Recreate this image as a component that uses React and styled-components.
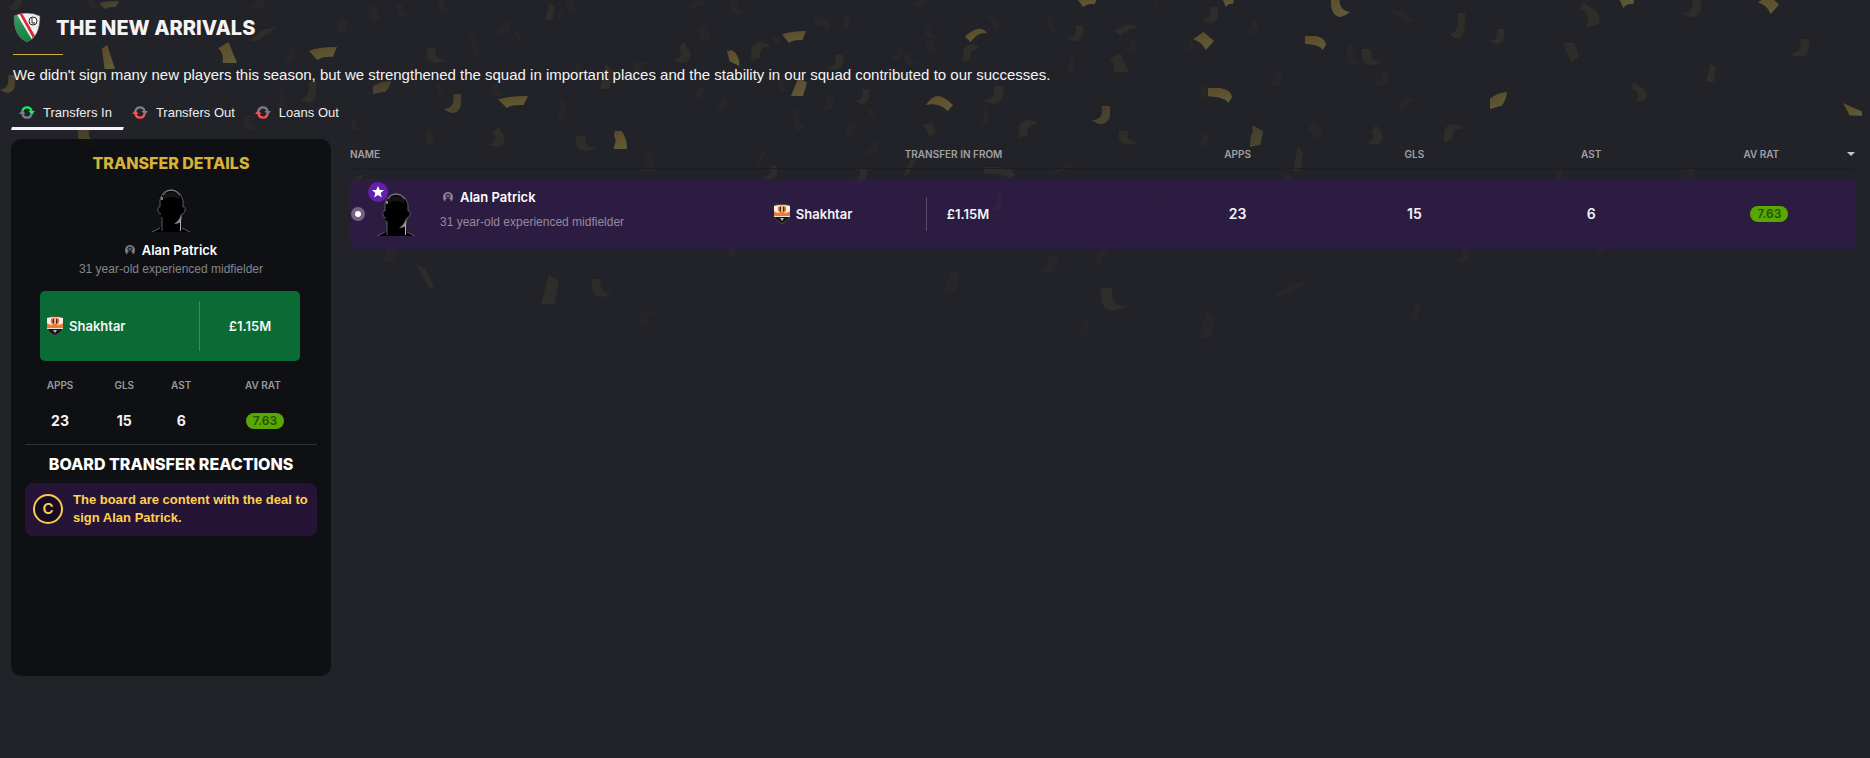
import React from "react";
import styled, { createGlobalStyle, css } from "styled-components";

const GlobalStyle = createGlobalStyle`
  *, *::before, *::after { box-sizing: border-box; }
  html, body { margin: 0; min-height: 100%; background: #222328; }
  body {
    color: #f4f4f5;
    font-family: "Inter", "Liberation Sans", sans-serif;
    font-size: 13px;
    line-height: 18px;
  }
  h1, h2, p { margin: 0; }
  table { border-collapse: collapse; border-spacing: 0; }
  th, td { padding: 0; }
`;

/* ---------- confetti backdrop ---------- */

const SHAPES = {
  j: "M11 0H20V9C20 16 15 20 10 20Q4 19 0 16Q10 15 11 8Z",
  l: "M9 0H0V9C0 16 5 20 10 20Q16 19 20 16Q10 15 9 8Z",
  r: "M0 20V11C0 4 5 0 11 0Q16 1 20 5Q10 4 9 12V17Z",
  q: "M20 20V11C20 4 15 0 9 0Q4 1 0 5Q10 4 11 12V17Z",
  c: "M12 0L19 9Q22 17 12 20L0 18Q11 14 9 9L6 6Z",
  d: "M3 0L16 7Q22 13 18 18L5 20Q14 11 0 6Z",
  t: "M9 0L20 5L15 20H0Z",
  b: "M0 0H14L20 15L10 20Z",
  k: "M0 6L11 0L20 20H5Q6 9 0 6Z",
  a: "M0 6Q6 0 20 0L17 15Q9 14 6 20Z",
  n: "M0 12Q8 0 14 1Q18 2 20 8Q13 4 5 20Z",
  h: "M0 12Q4 0 9 0Q14 1 20 12L16 20Q10 8 0 12Z",
  m: "M0 0H10Q19 2 20 12L17 20Q14 12 0 11Z",
  s: "M0 20L9 4L20 0L5 20Z",
  v: "M0 0L11 4L20 18L15 20Z",
  w: "M0 0L20 13V20L7 19Z",
  o: "M0 2L7 0Q20 6 19 20L4 14Z",
  p: "M0 20V8Q8 1 20 0Q19 9 14 16Z",
  x: "M0 8L10 0L20 10L12 20Q9 11 0 8Z",
  z: "M4 0L20 6L16 18L0 20Q0 9 4 7Z",
  e: "M3 0Q0 5 4 10L1 20H20Q20 7 12 0Z",
  f: "M0 3L8 0L20 20H4Z",
};

/* shape, x, y, width, height, strength 0-4 */
const CONFETTI = [
  ["j", 7, -8, 15, 18, 2], ["l", 88, -6, 15, 16, 1], ["a", 99, 1, 20, 8, 3], ["t", 152, 12, 9, 16, 0],
  ["j", 247, -6, 17, 16, 1], ["s", 250, 27, 27, 14, 2], ["k", 366, 5, 16, 15, 1], ["l", 397, 4, 12, 13, 1],
  ["l", 438, 0, 13, 12, 1], ["t", 336, 17, 13, 15, 1], ["v", 467, 30, 12, 26, 1], ["f", 102, 45, 13, 24, 4],
  ["k", 218, 42, 19, 21, 4], ["a", 309, 47, 28, 13, 4], ["j", 282, 48, 13, 16, 1], ["l", 427, 48, 19, 15, 2],
  ["j", 0, 75, 15, 18, 3], ["p", 373, 81, 18, 13, 3], ["j", 300, 82, 16, 21, 2], ["l", 437, 84, 9, 11, 1],
  ["j", 444, 94, 17, 19, 3], ["l", 244, 116, 14, 15, 1], ["l", 351, 119, 11, 12, 1], ["j", 276, 90, 8, 21, 1],
  ["l", 78, 127, 24, 20, 3], ["k", 424, 130, 10, 14, 1], ["t", 216, 55, 25, 11, 0],
  ["t", 545, 3, 10, 17, 2], ["s", 556, 8, 10, 12, 1], ["l", 567, 1, 15, 13, 1], ["n", 689, 0, 18, 10, 1],
  ["l", 730, -5, 17, 20, 1], ["j", 910, -6, 15, 13, 1], ["j", 494, 21, 16, 13, 1], ["v", 511, 28, 10, 12, 1],
  ["k", 696, 25, 16, 15, 1], ["m", 815, 17, 15, 15, 1], ["t", 842, 12, 8, 16, 1], ["c", 673, 42, 18, 21, 2],
  ["a", 782, 31, 24, 12, 4], ["o", 727, 50, 13, 16, 4], ["r", 751, 42, 20, 19, 2], ["x", 770, 35, 11, 10, 1],
  ["l", 925, 26, 14, 13, 1], ["l", 926, 41, 16, 12, 1], ["n", 965, 28, 22, 14, 4], ["r", 963, 44, 17, 18, 2],
  ["j", 890, 47, 13, 13, 1], ["l", 904, 53, 14, 12, 1], ["j", 827, 55, 16, 15, 2], ["r", 633, 61, 17, 12, 1],
  ["t", 600, 64, 13, 25, 2], ["t", 791, 78, 16, 18, 4], ["k", 573, 62, 11, 13, 1], ["l", 492, 83, 12, 14, 1],
  ["a", 498, 96, 30, 12, 4], ["t", 557, 98, 9, 21, 1], ["j", 690, 87, 14, 11, 1], ["j", 714, 98, 13, 13, 1],
  ["l", 793, 110, 13, 21, 1], ["j", 819, 97, 14, 14, 1], ["j", 855, 89, 14, 15, 2], ["v", 865, 106, 12, 16, 1],
  ["l", 779, 80, 8, 12, 1], ["h", 926, 96, 27, 15, 4], ["b", 923, 124, 13, 12, 2], ["r", 846, 124, 14, 13, 1],
  ["c", 488, 127, 17, 20, 2], ["l", 576, 136, 21, 15, 2], ["e", 613, 131, 14, 18, 4], ["c", 642, 149, 12, 23, 1],
  ["j", 864, 141, 14, 14, 1], ["s", 755, 150, 12, 17, 1], ["j", 763, 166, 14, 14, 2], ["s", 904, 157, 14, 18, 2],
  ["j", 851, 169, 16, 15, 2], ["c", 422, 130, 13, 15, 1],
  ["a", 1077, -5, 21, 12, 4], ["s", 1151, 0, 9, 11, 1], ["a", 1222, -6, 13, 13, 4], ["l", 1331, -8, 19, 25, 4],
  ["j", 1202, 7, 16, 16, 2], ["v", 1386, 9, 29, 13, 1], ["q", 985, 16, 14, 15, 1], ["l", 1048, 17, 11, 16, 1],
  ["j", 1067, 25, 16, 16, 2], ["n", 1115, 24, 23, 12, 2], ["j", 1243, 21, 15, 13, 1], ["c", 1125, 38, 12, 14, 1],
  ["x", 1193, 32, 21, 18, 4], ["c", 1186, 37, 8, 14, 1], ["m", 1305, 36, 21, 14, 4], ["k", 1109, 53, 20, 19, 2],
  ["t", 1067, 53, 8, 20, 1], ["l", 1347, 45, 13, 20, 1], ["l", 1362, 49, 20, 16, 2], ["j", 983, 86, 20, 18, 2],
  ["c", 980, 104, 9, 22, 1], ["j", 1269, 73, 12, 13, 1], ["j", 1373, 71, 15, 15, 1], ["c", 1196, 84, 12, 15, 1],
  ["m", 1208, 88, 24, 15, 4], ["j", 1092, 106, 18, 18, 3], ["r", 1400, 97, 16, 15, 1], ["r", 1019, 120, 19, 18, 2],
  ["l", 1119, 131, 19, 14, 2], ["z", 1250, 125, 13, 22, 3], ["j", 1195, 134, 13, 12, 1], ["x", 1307, 121, 16, 20, 1],
  ["c", 1366, 125, 17, 20, 2], ["t", 1293, 146, 10, 25, 2], ["s", 1051, 162, 29, 12, 1], ["m", 984, 167, 31, 12, 2],
  ["t", 1281, 172, 12, 20, 1], ["s", 1151, 185, 14, 18, 2], ["j", 992, 193, 10, 18, 3], ["c", 1180, 209, 16, 20, 1],
  ["t", 1342, 217, 11, 17, 1], ["q", 1076, 230, 13, 12, 1], ["j", 1038, 256, 19, 17, 1], ["r", 1096, 250, 14, 14, 1],
  ["l", 1101, 288, 25, 23, 2], ["s", 1274, 281, 38, 15, 1], ["t", 1199, 311, 16, 27, 1], ["t", 1411, 301, 9, 18, 1],
  ["t", 1080, 317, 9, 18, 0],
  ["d", 1580, 2, 20, 25, 2], ["a", 1618, -8, 18, 16, 4], ["j", 1682, 0, 19, 17, 2], ["x", 1758, -5, 21, 19, 4],
  ["j", 1449, 13, 16, 26, 2], ["j", 1489, 29, 15, 15, 2], ["b", 1563, 43, 16, 19, 2], ["j", 1790, 39, 19, 18, 2],
  ["t", 1706, 63, 10, 19, 2], ["d", 1631, 82, 16, 20, 2], ["p", 1490, 92, 17, 17, 4], ["w", 1843, 103, 19, 13, 4],
  ["r", 1444, 124, 19, 18, 2], ["j", 1547, 171, 15, 15, 1], ["j", 1677, 168, 18, 17, 1], ["r", 1711, 202, 20, 18, 1],
  ["s", 1596, 236, 16, 20, 1], ["j", 1455, 248, 14, 15, 1],
  ["s", 348, 174, 17, 16, 2], ["t", 384, 238, 14, 24, 1],
  ["j", 478, 186, 9, 18, 2], ["v", 416, 264, 18, 25, 2], ["t", 541, 274, 18, 30, 2], ["l", 592, 279, 19, 18, 2],
  ["c", 544, 230, 15, 14, 1], ["t", 728, 238, 10, 18, 1], ["t", 893, 191, 11, 20, 1], ["t", 944, 268, 16, 24, 1],
  ["r", 640, 310, 17, 17, 0], ["l", 754, 187, 14, 14, 1], ["k", 185, 178, 19, 17, 2], ["x", 309, 168, 15, 17, 1],
  ["q", 217, 144, 14, 16, 1], ["l", 425, 180, 14, 12, 0],
];

const CONFETTI_FILL = [
  { fill: "#7a6a30", opacity: 0.04 },
  { fill: "#7a6a30", opacity: 0.06 },
  { fill: "#7a6a30", opacity: 0.14 },
  { fill: "url(#gold)", opacity: 0.5 },
  { fill: "url(#gold)", opacity: 0.78 },
];

const Backdrop = styled.svg`
  position: absolute;
  top: 0;
  left: 0;
  width: 100%;
  height: 360px;
  z-index: -1;
  pointer-events: none;
`;

const Confetti = () => (
  <Backdrop viewBox="0 0 1870 360" preserveAspectRatio="xMinYMin slice" aria-hidden="true">
    <defs>
      <linearGradient id="gold" x1="0" y1="0" x2="0.4" y2="1">
        <stop offset="0" stopColor="#6e5328" />
        <stop offset="1" stopColor="#6e6a3a" />
      </linearGradient>
    </defs>
    {CONFETTI.map(([shape, x, y, w, h, strength], i) => (
      <path
        key={i}
        d={SHAPES[shape]}
        transform={`translate(${x} ${y}) scale(${w / 20} ${h / 20})`}
        {...CONFETTI_FILL[strength]}
      />
    ))}
  </Backdrop>
);

/* ---------- drawings ---------- */

const LegiaCrest = () => (
  <svg width="28" height="30" viewBox="0 0 28 30" aria-hidden="true">
    <defs>
      <clipPath id="legia-shield">
        <path d="M1 3Q7 0 14 0T27 3C27 16 24 24 14 29C4 24 1 16 1 3Z" />
      </clipPath>
      <linearGradient id="legia-green" x1="0" y1="0" x2="0" y2="1">
        <stop offset="0" stopColor="#3f9c63" />
        <stop offset="1" stopColor="#0d8040" />
      </linearGradient>
    </defs>
    <g clipPath="url(#legia-shield)">
      <path d="M0 0H28V30H0Z" fill="#ececec" />
      <path d="M0 0H4L23 30H0Z" fill="url(#legia-green)" />
      <path d="M3 0H12L28 26V30H21Z" fill="#f4f4f4" />
      <path d="M6 0H9L25 28L22 29Z" fill="#dc2a36" />
    </g>
    <path d="M1 3Q7 0 14 0T27 3C27 16 24 24 14 29C4 24 1 16 1 3Z" fill="none" stroke="#555" strokeOpacity=".6" />
    <circle cx="20" cy="8" r="4" fill="#fff" stroke="#222" />
    <path d="M19 5V10H22" fill="none" stroke="#222" />
  </svg>
);

const ShakhtarCrest = () => (
  <svg width="18" height="20" viewBox="0 0 18 20" aria-hidden="true">
    <path d="M1 1Q9 -1 17 1V11Q16 17 9 20Q2 17 1 11Z" fill="#55504c" />
    <path d="M1 2Q9 0 17 2V8Q17 11 14 11H4Q1 11 1 8Z" fill="#f6efe8" />
    <path d="M1 7Q3 9 9 9T17 7V12H1Z" fill="#ef7a2c" />
    <path d="M5 3Q4 9 9 9T13 3Q9 0 5 3Z" fill="#e8722a" />
    <path d="M8.500 2H9.500V8H8.500Z" fill="#f6efe8" />
    <path d="M7 3H8V8Q6 7 7 3ZM10 3H11Q12 7 10 8Z" fill="#3a2820" />
    <path d="M2 13H16Q14 17 9 19Q4 17 2 13Z" fill="#17171a" />
    <path d="M1 12H17V13H1Z" fill="#e6e1da" />
    <path d="M7 14H11L9 17Z" fill="#b9b9b9" />
  </svg>
);

const Silhouette = () => (
  <svg width="40" height="44" viewBox="0 0 40 44" aria-hidden="true">
    <path
      d="M1 44Q5 41 11 39V30Q8 25 7 23Q6 18 9 19V12Q11 2 20 2T32 12V19Q35 18 34 23Q33 26 31 26L30 32V39Q36 41 39 44Z"
      fill="#000"
    />
    <path d="M12 9Q20 4 29 9" fill="none" stroke="#141414" strokeWidth="5" />
    <path
      d="M9 19V12Q11 2 20 2T32 12V19Q35 18 34 23Q33 26 31 26L30 32"
      fill="none"
      stroke="#5c5c5c"
    />
    <path d="M12 7Q15 2 20 2T29 7" fill="none" stroke="#8a8a8a" />
    <path d="M9 19Q6 18 7 23Q8 26 10 26M11 29V43" fill="none" stroke="#5a5a5a" />
    <path d="M11 9V12" stroke="#f5f5f5" />
    <path d="M30 26Q29 32 23 36Q27 36 30 34Z" fill="#8a8a8a" />
    <path d="M29.500 32V43" stroke="#b4b4b4" />
    <path d="M1 44L9 40M39 44L31 40" stroke="#606060" />
  </svg>
);

const PersonIcon = () => (
  <svg width="10" height="10" viewBox="0 0 10 10" aria-hidden="true">
    <path
      fillRule="evenodd"
      d="M5 0A5 5 0 0 1 10 5Q10 8 8 9.500Q8 7 6 6.500Q7.500 5.500 7.500 4A2.500 2.500 0 0 0 2.500 4Q2.500 5.500 4 6.500Q2 7 2 9.500Q0 8 0 5A5 5 0 0 1 5 0Z"
      fill="currentColor"
    />
    <circle cx="5" cy="4" r="1.800" fill="currentColor" opacity=".6" />
  </svg>
);

const SwapIcon = ({ top, bottom }) => (
  <svg width="16" height="13" viewBox="0 0 16 13" aria-hidden="true">
    <path d="M3.500 5A4.600 4.600 0 0 1 12.500 5" fill="none" stroke={top} strokeWidth="2.400" />
    <path d="M9.500 5H16L12.800 9Z" fill={top} />
    <path d="M12.500 8A4.600 4.600 0 0 1 3.500 8" fill="none" stroke={bottom} strokeWidth="2.400" />
    <path d="M6.500 8H0L3.200 4Z" fill={bottom} />
  </svg>
);

/* ---------- page header ---------- */

const Page = styled.main`
  position: relative;
  z-index: 0;
  overflow: hidden;
  min-height: 100vh;
  padding: 14px 15px 24px 11px;
`;

const Header = styled.header`
  padding-left: 2px;
`;

const TitleRow = styled.div`
  display: flex;
  align-items: center;
  gap: 15px;
  height: 28px;
`;

const Title = styled.h1`
  font-size: 20px;
  font-weight: 800;
  line-height: 28px;
`;

const Accent = styled.div`
  width: 50px;
  height: 1px;
  margin: 12px 0 10px;
  background: #d4ad36;
`;

const Summary = styled.p`
  font-family: "Liberation Sans", sans-serif;
  font-size: 15px;
  line-height: 20px;
`;

const Tabs = styled.div`
  display: flex;
  margin-top: 12px;
`;

const Tab = styled.button`
  display: flex;
  align-items: center;
  gap: 8px;
  height: 33px;
  padding: 0 12px 3px 8px;
  border: 0;
  background: none;
  color: #ededee;
  font-family: "Liberation Sans", sans-serif;
  font-size: 13px;
  cursor: pointer;
  position: relative;

  ${({ $active }) =>
    $active &&
    css`
      &::after {
        content: "";
        position: absolute;
        inset: auto 0 0 0;
        height: 3px;
        background: #f8f0fa;
        clip-path: polygon(1px 0, 100% 0, calc(100% - 1px) 100%, 0 100%);
      }
    `}
`;

const Content = styled.div`
  display: grid;
  grid-template-columns: 320px minmax(0, 1fr);
  gap: 19px;
  margin-top: 9px;
  align-items: start;
`;

/* ---------- shared parts ---------- */

const PlayerName = styled.div`
  display: flex;
  align-items: center;
  gap: 7px;
  color: ${({ $tone }) => ($tone === "row" ? "#8d8299" : "#7d7e83")};

  strong {
    color: #fff;
    font-weight: 600;
  }
`;

const PlayerInfo = styled.p`
  color: ${({ $tone }) => ($tone === "row" ? "#938a9e" : "#84858a")};
  font-family: "Liberation Sans", sans-serif;
  font-size: 12px;
`;

const Club = styled.div`
  display: flex;
  align-items: center;
  gap: 5px;
  flex: ${({ $basis }) => $basis};
  font-weight: 600;
`;

const Fee = styled.div`
  display: flex;
  align-items: center;
  justify-content: ${({ $centred }) => ($centred ? "center" : "flex-start")};
  flex: 1;
  height: ${({ $centred }) => ($centred ? "50px" : "34px")};
  padding-left: ${({ $centred }) => ($centred ? "0" : "20px")};
  border-left: 1px solid rgba(255, 255, 255, 0.2);
  font-weight: 600;
`;

const Rating = styled.span`
  display: inline-block;
  width: 38px;
  height: 16px;
  margin-left: 4px;
  border-radius: 8px;
  background: #58a800;
  color: #24520a;
  font-size: 12px;
  font-weight: 600;
  line-height: 16px;
  text-align: center;
  vertical-align: text-bottom;
`;

/* ---------- details panel ---------- */

const Panel = styled.aside`
  min-height: 537px;
  padding: 14px;
  border-radius: 10px;
  background: rgba(15, 16, 19, 0.95);
`;

const PanelTitle = styled.h2`
  color: ${({ $gold }) => ($gold ? "#d7b138" : "#fff")};
  font-size: 16px;
  font-weight: 800;
  line-height: 20px;
  text-align: center;
`;

const Profile = styled.div`
  display: flex;
  flex-direction: column;
  align-items: center;
  gap: 1px;
  margin: 15px 0 13px;

  ${PlayerName} {
    margin-top: 8px;
  }
`;

const DealCard = styled.div`
  display: flex;
  align-items: center;
  height: 70px;
  margin: 0 17px 0 15px;
  padding-left: 6px;
  border-radius: 5px;
  background: #0a6c34;
`;

const StatTable = styled.table`
  width: 100%;
  table-layout: fixed;
  border-bottom: 1px solid #303136;
  text-align: center;

  th {
    height: 48px;
    color: #98999d;
    font-size: 10px;
    font-weight: 600;
  }
  td {
    height: 35px;
    padding-bottom: 11px;
    font-size: 14px;
    font-weight: 700;
  }
`;

const Reaction = styled.div`
  display: flex;
  align-items: center;
  gap: 10px;
  margin-top: 9px;
  padding: 8px 0 8px 8px;
  min-height: 53px;
  border-radius: 8px;
  background: #261437;
  color: #ffd24c;
  font-weight: 600;

  p {
    padding-bottom: 1px;
    font-family: "Liberation Sans", sans-serif;
  }
`;

const Grade = styled.span`
  display: grid;
  place-items: center;
  flex: none;
  width: 30px;
  height: 30px;
  border: 2px solid #f8cc4b;
  border-radius: 50%;
  background: #180c24;
  font-size: 15px;
`;

/* ---------- transfers table ---------- */

const TransferTable = styled.table`
  width: 100%;
  table-layout: fixed;
  border-collapse: separate;
  text-align: center;

  th {
    height: 30px;
    border-bottom: 1px solid #1d1e22;
    color: #a0a1a5;
    font-size: 10px;
    font-weight: 600;
  }
  th:first-child {
    text-align: left;
  }
  tbody::before {
    content: "";
    display: block;
    height: 10px;
  }
  td {
    height: 70px;
    padding-bottom: 1px;
    background: rgba(47, 27, 71, 0.85);
    font-size: 14px;
    font-weight: 600;
  }
  td:first-child {
    border-radius: 5px 0 0 5px;
  }
  td:last-child {
    border-radius: 0 5px 5px 0;
  }
`;

const SortButton = styled.button`
  display: flex;
  align-items: center;
  width: 100%;
  padding: 0;
  border: 0;
  background: none;
  color: inherit;
  font: inherit;
  cursor: pointer;

  span {
    flex: 1;
    padding-right: 4px;
  }
  &::after {
    content: "";
    border: 4px solid transparent;
    border-top-color: #c4c5c8;
    border-bottom: 0;
  }
`;

const PlayerCell = styled.div`
  display: flex;
  align-items: center;
  padding-left: 1px;
  font-size: 13px;
  font-weight: 400;
  text-align: left;
`;

const Pick = styled.input`
  appearance: none;
  flex: none;
  width: 14px;
  height: 14px;
  margin: 0 11px 0 0;
  border: 4px solid #72627f;
  border-radius: 50%;
  background: #fff;
`;

const Portrait = styled.div`
  position: relative;
  width: 40px;
  height: 44px;
  margin-right: 24px;
`;

const Badge = styled.span`
  position: absolute;
  top: -10px;
  left: -8px;
  display: grid;
  place-items: center;
  width: 20px;
  height: 20px;
  border-radius: 50%;
  background: #6420ac;
`;

const PlayerText = styled.div`
  display: grid;
  gap: 7px;
  padding-bottom: 8px;

  ${PlayerName} {
    padding-left: 3px;
  }
`;

const DealCell = styled.div`
  display: flex;
  align-items: center;
  padding-left: 15px;
  font-size: 13px;
  text-align: left;
`;

const player = {
  name: "Alan Patrick",
  info: "31 year-old experienced midfielder",
  club: "Shakhtar",
  fee: "£1.15M",
  apps: 23,
  goals: 15,
  assists: 6,
  rating: "7.63",
};

const ReactionSection = styled.section`
  padding-top: 9px;
`;

const Reactions = () => (
  <ReactionSection>
    <PanelTitle>BOARD TRANSFER REACTIONS</PanelTitle>
    <Reaction>
      <Grade>C</Grade>
      <p>The board are content with the deal to sign Alan Patrick.</p>
    </Reaction>
  </ReactionSection>
);

const Details = () => (
  <Panel>
    <PanelTitle $gold>TRANSFER DETAILS</PanelTitle>
    <Profile>
      <Silhouette />
      <PlayerName>
        <PersonIcon />
        <strong>{player.name}</strong>
      </PlayerName>
      <PlayerInfo>{player.info}</PlayerInfo>
    </Profile>
    <DealCard>
      <Club $basis="0 0 153px">
        <ShakhtarCrest />
        {player.club}
      </Club>
      <Fee $centred>{player.fee}</Fee>
    </DealCard>
    <StatTable>
      <colgroup>
        <col width="24%" />
        <col width="20%" />
        <col width="19%" />
        <col width="37%" />
      </colgroup>
      <thead>
        <tr>
          <th scope="col">APPS</th>
          <th scope="col">GLS</th>
          <th scope="col">AST</th>
          <th scope="col">AV RAT</th>
        </tr>
      </thead>
      <tbody>
        <tr>
          <td>{player.apps}</td>
          <td>{player.goals}</td>
          <td>{player.assists}</td>
          <td><Rating>{player.rating}</Rating></td>
        </tr>
      </tbody>
    </StatTable>
    <Reactions />
  </Panel>
);

const Transfers = () => (
  <TransferTable>
    <colgroup>
      <col width="27.1%" />
      <col width="26%" />
      <col width="11.75%" />
      <col width="11.75%" />
      <col width="11.75%" />
      <col width="11.65%" />
    </colgroup>
    <thead>
      <tr>
        <th scope="col">NAME</th>
        <th scope="col">TRANSFER IN FROM</th>
        <th scope="col">APPS</th>
        <th scope="col">GLS</th>
        <th scope="col">AST</th>
        <th scope="col" aria-sort="descending">
          <SortButton type="button"><span>AV RAT</span></SortButton>
        </th>
      </tr>
    </thead>
    <tbody>
      <tr>
        <td>
          <PlayerCell>
            <Pick type="radio" name="player" aria-label={player.name} />
            <Portrait>
              <Silhouette />
              <Badge>
                <svg width="12" height="12" viewBox="0 0 12 12" aria-hidden="true">
                  <path d="M6 0L7.800 4H12L8.700 7L9.800 11.500L6 9L2.200 11.500L3.300 7L0 4H4.200Z" fill="#fff" />
                </svg>
              </Badge>
            </Portrait>
            <PlayerText>
              <PlayerName $tone="row">
                <PersonIcon />
                <strong>{player.name}</strong>
              </PlayerName>
              <PlayerInfo $tone="row">{player.info}</PlayerInfo>
            </PlayerText>
          </PlayerCell>
        </td>
        <td>
          <DealCell>
            <Club $basis="0 0 153px">
              <ShakhtarCrest />
              {player.club}
            </Club>
            <Fee>{player.fee}</Fee>
          </DealCell>
        </td>
        <td>{player.apps}</td>
        <td>{player.goals}</td>
        <td>{player.assists}</td>
        <td><Rating>{player.rating}</Rating></td>
      </tr>
    </tbody>
  </TransferTable>
);

export default function App() {
  return (
    <>
      <GlobalStyle />
      <Page>
        <Confetti />
        <Header>
          <TitleRow>
            <LegiaCrest />
            <Title>THE NEW ARRIVALS</Title>
          </TitleRow>
          <Accent />
          <Summary>
            We didn't sign many new players this season, but we strengthened the squad in important places and the
            stability in our squad contributed to our successes.
          </Summary>
        </Header>
        <Tabs role="tablist">
          <Tab type="button" role="tab" aria-selected="true" $active>
            <SwapIcon top="#12ee62" bottom="#74808e" />
            Transfers In
          </Tab>
          <Tab type="button" role="tab" aria-selected="false">
            <SwapIcon top="#74808e" bottom="#ff4f4f" />
            Transfers Out
          </Tab>
          <Tab type="button" role="tab" aria-selected="false">
            <SwapIcon top="#74808e" bottom="#ff4f4f" />
            Loans Out
          </Tab>
        </Tabs>
        <Content>
          <Details />
          <Transfers />
        </Content>
      </Page>
    </>
  );
}
